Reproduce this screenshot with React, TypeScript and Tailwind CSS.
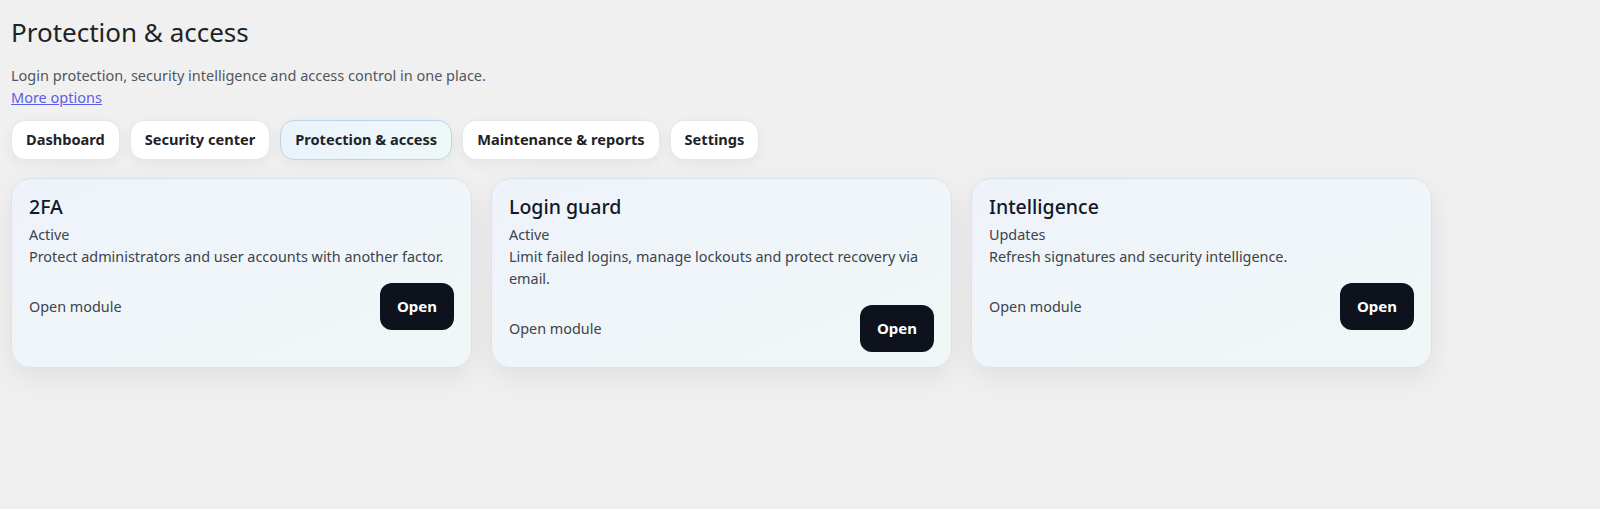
import { useState } from 'react';

type Module = {
  title: string;
  status: string;
  description: string;
};

const tabs = ['Dashboard', 'Security center', 'Protection & access', 'Maintenance & reports', 'Settings'];

const modules: Module[] = [
  {
    title: '2FA',
    status: 'Active',
    description: 'Protect administrators and user accounts with another factor.',
  },
  {
    title: 'Login guard',
    status: 'Active',
    description: 'Limit failed logins, manage lockouts and protect recovery via email.',
  },
  {
    title: 'Intelligence',
    status: 'Updates',
    description: 'Refresh signatures and security intelligence.',
  },
];

const App = () => {
  const [activeTab, setActiveTab] = useState('Protection & access');

  return (
    <div className="min-h-screen bg-[#f0f0f0] px-[11px] pt-[15px] font-['Noto_Sans',sans-serif] text-[#1d2327]">
      <h1 className="text-[26px] leading-[34px] font-normal text-[#1d2327]">Protection &amp; access</h1>

      <p className="mt-[15px] text-[14.5px] leading-[23px] text-[#50575e]">
        Login protection, security intelligence and access control in one place.
      </p>
      <a href="#" className="block text-[14.5px] leading-[20px] text-[#5b5ee8] underline">
        More options
      </a>

      {/* Section tabs */}
      <div className="mt-[13px] flex gap-[10px]">
        {tabs.map(tab => (
          <button
            key={tab}
            onClick={() => setActiveTab(tab)}
            className={
              tab === activeTab
                ? 'h-[40px] rounded-[14px] border border-[#b9d5ee] bg-gradient-to-r from-[#eaf3fc] to-[#eff8f7] px-[14px] text-[14.6px] font-bold text-[#1d2327] shadow-[0_4px_14px_rgba(0,0,0,0.05)]'
                : 'h-[40px] rounded-[14px] border border-[#e4e7ea] bg-white px-[14px] text-[14.6px] font-bold text-[#1d2327] shadow-[0_4px_14px_rgba(0,0,0,0.05)]'
            }
          >
            {tab}
          </button>
        ))}
      </div>

      {/* Module cards */}
      <div className="mt-[18px] grid grid-cols-[repeat(3,461px)] gap-[19px]">
        {modules.map(m => (
          <div
            key={m.title}
            className="rounded-[20px] border border-[#d9e3ec] bg-gradient-to-br from-[#eef3fb] to-[#f1f7f6] px-[17px] pt-[15px] pb-[15px] shadow-[0_10px_28px_rgba(0,0,0,0.07)]"
          >
            <h3 className="text-[19.5px] leading-[26px] font-medium text-[#111827]">{m.title}</h3>
            <div className="mt-[4px] text-[14.4px] leading-[22px] text-[#3c434a]">{m.status}</div>
            <p className="text-[14.4px] leading-[22px] text-[#3c434a]">{m.description}</p>
            <div className="mt-[15px] flex items-center justify-between">
              <span className="text-[14.4px] text-[#3c434a]">Open module</span>
              <button className="h-[47px] w-[74px] rounded-[12px] bg-[#0d121c] text-[15px] font-bold text-white">
                Open
              </button>
            </div>
          </div>
        ))}
      </div>
    </div>
  );
};

export default App;
